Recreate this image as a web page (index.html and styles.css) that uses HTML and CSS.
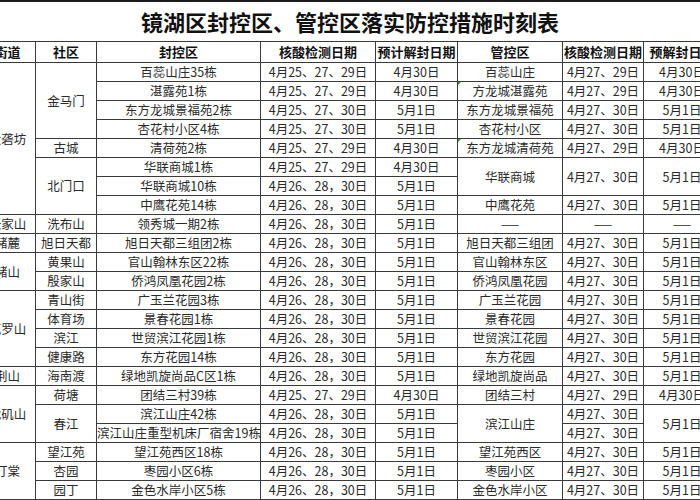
FILE: index.html
```html
<!DOCTYPE html>
<html lang="zh-CN">
<head>
<meta charset="utf-8">
<title>镜湖区封控区、管控区落实防控措施时刻表</title>
<link rel="stylesheet" href="styles.css">
</head>
<body>
<div class="page">
  <h1 class="title">镜湖区封控区、管控区落实防控措施时刻表</h1>
  <table class="sheet">
    <colgroup>
      <col class="c1"><col class="c2"><col class="c3"><col class="c4"><col class="c5"><col class="c6"><col class="c7"><col class="c8">
    </colgroup>
    <thead>
      <tr>
        <th>街道</th><th>社区</th><th>封控区</th><th>核酸检测日期</th><th>预计解封日期</th><th>管控区</th><th>核酸检测日期</th><th>预解封日期</th>
      </tr>
    </thead>
    <tbody>
      <tr><td rowspan="8">大砻坊</td><td rowspan="4">金马门</td><td>百蕊山庄35栋</td><td>4月25、27、29日</td><td>4月30日</td><td>百蕊山庄</td><td>4月27、29日</td><td>4月30日</td></tr>
      <tr><td>湛露苑1栋</td><td>4月25、27、29日</td><td>4月30日</td><td class="note">方龙城湛露苑</td><td>4月27、29日</td><td>4月30日</td></tr>
      <tr><td>东方龙城景福苑2栋</td><td>4月25、27、30日</td><td>5月1日</td><td>东方龙城景福苑</td><td>4月27、30日</td><td>5月1日</td></tr>
      <tr><td>杏花村小区4栋</td><td>4月25、27、30日</td><td>5月1日</td><td>杏花村小区</td><td>4月27、30日</td><td>5月1日</td></tr>
      <tr><td>古城</td><td>清荷苑2栋</td><td>4月25、27、29日</td><td>4月30日</td><td class="note">东方龙城清荷苑</td><td>4月27、29日</td><td>4月30日</td></tr>
      <tr><td rowspan="3">北门口</td><td>华联商城1栋</td><td>4月25、27、29日</td><td>4月30日</td><td rowspan="2">华联商城</td><td rowspan="2">4月27、30日</td><td rowspan="2">5月1日</td></tr>
      <tr><td>华联商城10栋</td><td>4月26、28，30日</td><td>5月1日</td></tr>
      <tr><td>中鹰花苑14栋</td><td>4月26、28，30日</td><td>5月1日</td><td>中鹰花苑</td><td>4月27、30日</td><td>5月1日</td></tr>
      <tr><td>张家山</td><td>洗布山</td><td>领秀城一期2栋</td><td>4月26、28，30日</td><td>5月1日</td><td class="dash">——</td><td class="dash">——</td><td class="dash">——</td></tr>
      <tr><td>赭麓</td><td>旭日天都</td><td>旭日天都三组团2栋</td><td>4月26、28，30日</td><td>5月1日</td><td>旭日天都三组团</td><td>4月27、30日</td><td>5月1日</td></tr>
      <tr><td rowspan="2">赭山</td><td>黄果山</td><td>官山翰林东区22栋</td><td>4月26、28，30日</td><td>5月1日</td><td>官山翰林东区</td><td>4月27、30日</td><td>5月1日</td></tr>
      <tr><td>殷家山</td><td>侨鸿凤凰花园2栋</td><td>4月26、28，30日</td><td>5月1日</td><td>侨鸿凤凰花园</td><td>4月27、30日</td><td>5月1日</td></tr>
      <tr><td rowspan="4">范罗山</td><td>青山街</td><td>广玉兰花园3栋</td><td>4月26、28，30日</td><td>5月1日</td><td>广玉兰花园</td><td>4月27、30日</td><td>5月1日</td></tr>
      <tr><td>体育场</td><td>景春花园1栋</td><td>4月26、28，30日</td><td>5月1日</td><td>景春花园</td><td>4月27、30日</td><td>5月1日</td></tr>
      <tr><td>滨江</td><td>世贸滨江花园1栋</td><td>4月26、28，30日</td><td>5月1日</td><td>世贸滨江花园</td><td>4月27、30日</td><td>5月1日</td></tr>
      <tr><td>健康路</td><td>东方花园14栋</td><td>4月26、28，30日</td><td>5月1日</td><td>东方花园</td><td>4月27、30日</td><td>5月1日</td></tr>
      <tr><td>荆山</td><td>海南渡</td><td>绿地凯旋尚品C区1栋</td><td>4月26、28，30日</td><td>5月1日</td><td>绿地凯旋尚品</td><td>4月27、30日</td><td>5月1日</td></tr>
      <tr><td rowspan="3">弋矶山</td><td>荷塘</td><td>团结三村39栋</td><td>4月25、27、29日</td><td>4月30日</td><td>团结三村</td><td>4月27、29日</td><td>4月30日</td></tr>
      <tr><td rowspan="2">春江</td><td>滨江山庄42栋</td><td>4月26、28，30日</td><td>5月1日</td><td rowspan="2">滨江山庄</td><td>4月27、30日</td><td rowspan="2">5月1日</td></tr>
      <tr><td>滨江山庄重型机床厂宿舍19栋</td><td>4月26、28，30日</td><td>5月1日</td><td>4月27、30日</td></tr>
      <tr><td rowspan="3">汀棠</td><td>望江苑</td><td>望江苑西区18栋</td><td>4月26、28，30日</td><td>5月1日</td><td>望江苑西区</td><td>4月27、30日</td><td>5月1日</td></tr>
      <tr><td>杏园</td><td>枣园小区6栋</td><td>4月26、28，30日</td><td>5月1日</td><td>枣园小区</td><td>4月27、30日</td><td>5月1日</td></tr>
      <tr><td>园丁</td><td>金色水岸小区5栋</td><td>4月26、28，30日</td><td>5月1日</td><td>金色水岸小区</td><td>4月27、30日</td><td>5月1日</td></tr>
    </tbody>
  </table>
</div>
</body>
</html>
```
FILE: styles.css
```css
html, body {
  margin: 0;
  padding: 0;
  background: #fff;
}
body {
  width: 700px;
  height: 500px;
  overflow: hidden;
  font-family: "Noto Sans CJK SC", "Liberation Sans", sans-serif;
  color: #2a2a2a;
}
.page {
  border-top: 2px solid #1a1a1a;
}
.title {
  margin: 0;
  height: 39px;
  line-height: 38px;
  font-size: 22px;
  font-weight: 700;
  text-align: center;
  color: #111;
  letter-spacing: 0;
}
.sheet {
  margin-left: -21px;
  width: 741px;
  table-layout: fixed;
  border-collapse: collapse;
  font-size: 12.5px;
}
.c1 { width: 56px; }
.c2 { width: 61px; }
.c3 { width: 164px; }
.c4 { width: 115px; }
.c5 { width: 82px; }
.c6 { width: 105px; }
.c7 { width: 81px; }
.c8 { width: 77px; }
.sheet th,
.sheet td {
  border: 1px solid #3a3a3a;
  padding: 0;
  text-align: center;
  vertical-align: middle;
  white-space: nowrap;
  overflow: visible;
}
.sheet th {
  height: 20px;
  line-height: 20px;
  font-size: 13px;
  font-weight: 700;
  color: #111;
}
.sheet td {
  height: 18px;
  line-height: 18px;
}
.sheet td.dash {
  font-size: 11px;
  letter-spacing: 3px;
  text-indent: 3px;
}
.note {
  position: relative;
}
.note::before {
  content: "";
  position: absolute;
  left: 0;
  top: 0;
  border-top: 3px solid #2e9a3c;
  border-right: 3px solid transparent;
}
```
